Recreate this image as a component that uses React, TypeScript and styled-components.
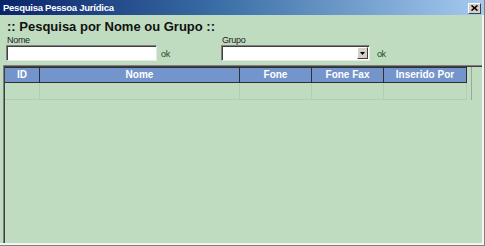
import React from "react";
import styled, { createGlobalStyle } from "styled-components";

const Global = createGlobalStyle`
  html, body { margin: 0; padding: 0; background: #c0dcc0; }
  body { font-family: "Liberation Sans", Arial, sans-serif; }
`;

const Window = styled.div`
  width: 485px;
  height: 246px;
  box-sizing: border-box;
  display: flex;
  flex-direction: column;
  background: #c0dcc0;
  border-right: 1px solid #808080;
  border-bottom: 1px solid #808080;
  overflow: hidden;
`;

const TitleBar = styled.div`
  height: 15px;
  flex: none;
  display: flex;
  align-items: center;
  justify-content: space-between;
  padding: 0 3px 0 3px;
  background: linear-gradient(to right, #0a246a 0%, #3a6ea5 45%, #a6caf0 100%);
`;

const TitleText = styled.span`
  color: #fff;
  font-weight: bold;
  font-size: 9.5px;
  letter-spacing: -0.25px;
`;

const CloseButton = styled.div`
  width: 13px;
  height: 11px;
  box-sizing: border-box;
  margin-top: 1px;
  background: #d4d0c8;
  border-top: 1px solid #fff;
  border-left: 1px solid #fff;
  border-right: 1px solid #404040;
  border-bottom: 1px solid #404040;
  display: flex;
  align-items: center;
  justify-content: center;
`;

const Body = styled.div`
  flex: 1;
  display: flex;
  flex-direction: column;
  border-right: 2px solid #f4f4f0;
  border-bottom: 2px solid #f4f4f0;
  min-height: 0;
`;

const Heading = styled.div`
  font-weight: bold;
  font-size: 13px;
  color: #111;
  padding: 4px 0 0 7px;
  height: 14px;
  line-height: 15px;
`;

const FormRow = styled.div`
  display: flex;
  padding: 3px 0 0 6px;
`;

const Field = styled.div<{ $ml?: number }>`
  display: flex;
  flex-direction: column;
  margin-left: ${(p) => p.$ml ?? 0}px;
`;

const Label = styled.span`
  font-size: 9px;
  color: #222;
  line-height: 9px;
  height: 9px;
  padding-left: 1px;
  letter-spacing: -0.3px;
`;

const InputLine = styled.div`
  display: flex;
  align-items: flex-end;
`;

const TextBox = styled.div<{ $w: number }>`
  width: ${(p) => p.$w}px;
  height: 16px;
  box-sizing: border-box;
  background: #fff;
  border-top: 1px solid #808080;
  border-left: 1px solid #808080;
  border-right: 1px solid #e8e8e8;
  border-bottom: 1px solid #e8e8e8;
  box-shadow: inset 1px 1px 0 #404040;
  display: flex;
  justify-content: flex-end;
  align-items: center;
  padding-right: 1px;
`;

const DropButton = styled.div`
  width: 11px;
  height: 12px;
  box-sizing: border-box;
  background: #d4d0c8;
  border-top: 1px solid #fff;
  border-left: 1px solid #fff;
  border-right: 1px solid #404040;
  border-bottom: 1px solid #404040;
  display: flex;
  align-items: center;
  justify-content: center;
`;

const Ok = styled.span<{ $ml: number }>`
  font-size: 9px;
  color: #1f4a1f;
  margin-left: ${(p) => p.$ml}px;
  margin-bottom: 2px;
  letter-spacing: -0.3px;
`;

const GridFrame = styled.div`
  flex: 1;
  margin: 4px 0 0 3px;
  border-top: 1px solid #808080;
  border-left: 1px solid #808080;
  box-shadow: inset 1px 1px 0 #404040;
  padding: 1px 0 0 1px;
  display: flex;
  flex-direction: column;
`;

const Table = styled.div`
  width: 466px;
  display: grid;
  grid-template-columns: 35px 200px 72px 72px 83px;
  border-right: 1px solid #9aa89a;
`;

const HeadCell = styled.div`
  height: 16px;
  box-sizing: border-box;
  background: #7495cb;
  border-top: 1px solid #303030;
  border-bottom: 1px solid #303030;
  border-right: 1px solid #303030;
  color: #fff;
  font-weight: bold;
  font-size: 10px;
  display: flex;
  align-items: center;
  justify-content: center;
  line-height: 14px;
`;

const Cell = styled.div`
  height: 17px;
  box-sizing: border-box;
  border-right: 1px solid #b2ceb2;
  border-bottom: 1px solid #b2ceb2;
`;

const columns = ["ID", "Nome", "Fone", "Fone Fax", "Inserido Por"];

export default function App() {
  return (
    <>
      <Global />
      <Window>
        <TitleBar>
          <TitleText>Pesquisa Pessoa Jurídica</TitleText>
          <CloseButton>
            <svg width="7" height="6" viewBox="0 0 7 6">
              <path d="M0.5 0.5 L6.5 5.5 M6.5 0.5 L0.5 5.5" stroke="#000" strokeWidth="1.6" />
            </svg>
          </CloseButton>
        </TitleBar>
        <Body>
          <Heading>:: Pesquisa por Nome ou Grupo ::</Heading>
          <FormRow>
            <Field>
              <Label>Nome</Label>
              <InputLine>
                <TextBox $w={151} />
                <Ok $ml={4}>ok</Ok>
              </InputLine>
            </Field>
            <Field $ml={51}>
              <Label>Grupo</Label>
              <InputLine>
                <TextBox $w={149}>
                  <DropButton>
                    <svg width="5" height="3" viewBox="0 0 5 3">
                      <path d="M0 0 H5 L2.5 3 Z" fill="#000" />
                    </svg>
                  </DropButton>
                </TextBox>
                <Ok $ml={7}>ok</Ok>
              </InputLine>
            </Field>
          </FormRow>
          <GridFrame>
            <Table>
              {columns.map((c) => (
                <HeadCell key={c}>{c}</HeadCell>
              ))}
              {columns.map((c) => (
                <Cell key={c + "r"} />
              ))}
            </Table>
          </GridFrame>
        </Body>
      </Window>
    </>
  );
}
